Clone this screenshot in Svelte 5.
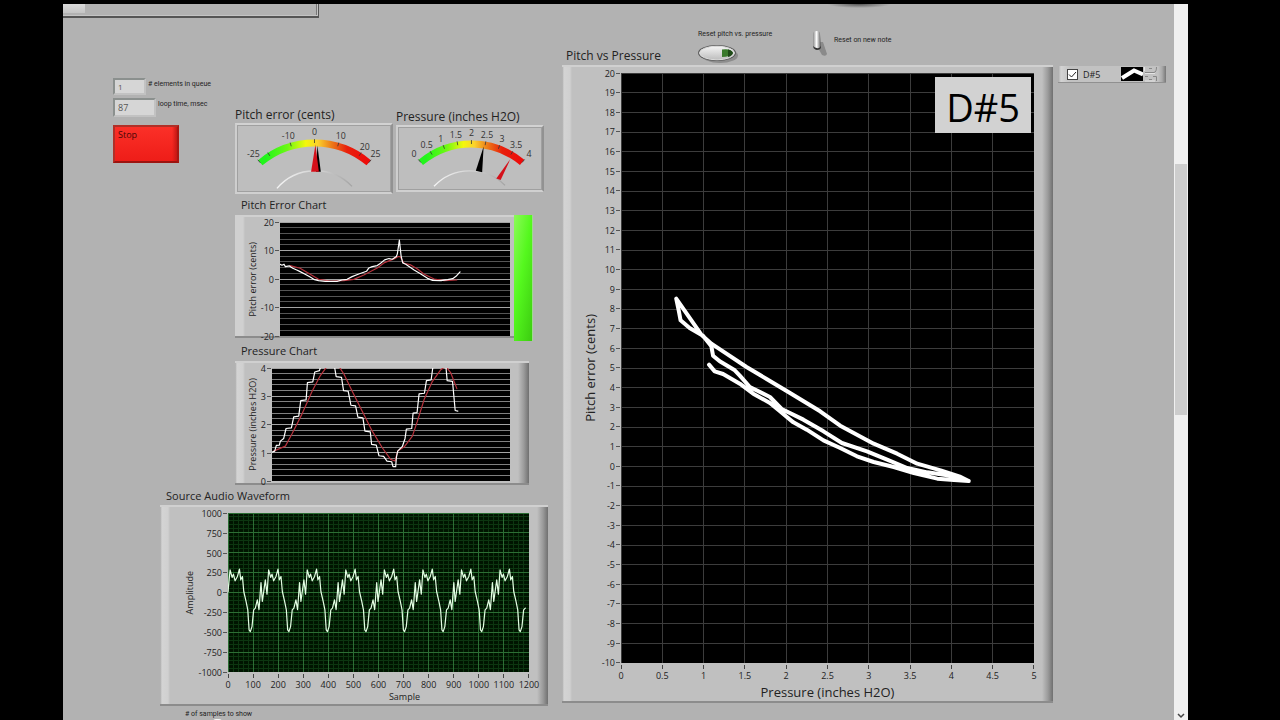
<script>
	let stopped = $state(false);
	let resetOnNote = $state(false);
	let showTrace = $state(true);
	let queue = $state('1');
	let loopTime = $state('87');

	const range = (from, to, step) => {
		const out = [];
		const count = Math.round((to - from) / step);
		for (let i = 0; i <= count; i++) out.push(from + i * step);
		return out;
	};

	// one cycle of the note, measured from its trough
	const cycle = [
		[0, 355], [5, 340], [10, 290], [15, 285], [21, 260], [26, 289], [32, 208], [36, 265],
		[45, 200], [50, 243], [55, 170], [61, 193], [65, 183], [70, 203], [77, 190], [83, 168],
		[87, 200], [92, 190], [96, 235], [103, 265], [108, 290], [112, 350]
	];
	const wave = [[0, 236]];
	for (let n = -1; n < 8; n++) {
		for (const [dx, y] of cycle) {
			const x = 67 + n * 115.7 + dx;
			if (x > 3 && x < 893) wave.push([x, y]);
		}
	}

	const pitchChart = {
		name: 'pitch',
		yLabel: 'Pitch error (cents)',
		yTicks: range(-20, 20, 10).reverse(),
		yMinor: 20,
		yMajor: 4,
		box: '0 0 686 340',
		lines: [
			{
				color: '#b8323c',
				points:
					'30,130 60,138 90,156 115,171 150,176 190,175 220,171 250,158 290,137 310,122 340,110 353,103 358,103 370,123 390,128 410,140 430,156 460,170 490,175 527,173'
			},
			{
				color: '#fff',
				points:
					'0,126 6,129 12,126 16,133 28,131 38,138 50,143 60,148 75,156 90,164 103,172 115,175 135,177 170,177 185,173 200,171 215,163 235,155 258,147 265,137 275,133 290,130 300,123 312,113 325,109 335,111 347,103 350,95 356,54 361,100 366,122 375,126 400,143 420,155 440,168 455,174 480,175 500,172 515,169 525,162 537,149'
			}
		]
	};

	const pressureChart = {
		name: 'pressure',
		yLabel: 'Pressure (inches H2O)',
		yTicks: range(0, 4, 1).reverse(),
		yMinor: 20,
		yMajor: 4,
		box: '0 0 712 340',
		lines: [
			{
				color: '#b8323c',
				points:
					'5,250 40,235 60,198 90,138 120,70 145,22 165,-5 200,-5 215,18 240,70 270,130 300,190 330,240 355,275 368,280 376,250 395,238 420,205 435,160 455,95 480,40 505,5 520,-5 535,15 553,62'
			},
			{
				color: '#fff',
				points:
					'0,253 8,250 13,233 22,232 25,220 35,212 42,182 58,180 65,147 80,145 86,98 102,96 106,44 122,42 128,12 142,8 147,-10 186,-10 192,26 208,28 214,68 228,70 236,112 250,114 257,148 272,150 278,190 294,192 298,230 312,232 320,264 334,266 344,280 358,282 362,297 370,297 372,270 376,250 390,236 398,212 402,184 418,182 422,136 434,134 440,78 456,76 462,38 476,36 482,-8 520,-8 524,38 540,40 548,128 556,130'
			}
		]
	};

	const waveChart = {
		name: 'wave',
		yLabel: 'Amplitude',
		xLabel: 'Sample',
		yTicks: range(-1000, 1000, 250).reverse(),
		xTicks: range(0, 1200, 100),
		yMinor: 40,
		yMajor: 8,
		xMinor: 60,
		xMajor: 12,
		box: '0 0 903 476',
		lines: [{ color: '#e4ffe4', points: wave.map((p) => p.join()).join(' ') }]
	};

	const xyChart = {
		name: 'xy',
		yLabel: 'Pitch error (cents)',
		xLabel: 'Pressure (inches H2O)',
		yTicks: range(-10, 20, 1).reverse(),
		xTicks: range(0, 5, 0.5),
		yMajor: 30,
		xMajor: 10,
		box: '-55 -620 1234 1770',
		lines: [
			{
				color: '#fff',
				width: 4,
				points:
					'208,255 225,275 250,283 300,312 340,342 390,370 420,395 460,428 500,450 550,482 600,505 650,530 700,547 760,562 820,580 890,597 940,601 984,604 960,592 900,572 830,552 770,522 700,492 650,465 600,438 540,395 450,340 380,298 320,262 260,222 215,192 185,165 110,57 118,95 123,122 150,145 190,168 215,200 220,228 240,245 285,272 300,288 330,322 390,352 425,388 490,420 550,455 605,490 680,515 740,540 800,565 860,578 940,590 984,604'
			}
		]
	};

	const pitchGauge = {
		name: 'g-pitch',
		title: 'Pitch error (cents)',
		width: 158,
		height: 69,
		cx: 79.5,
		cy: 107,
		r: 86.5,
		min: -25,
		max: 25,
		ticks: [-25, -20, -10, 0, 10, 20, 25],
		hidden: -20,
		inner: 'M41 67 A52 52 0 0 1 118 65',
		needles: [
			{ color: '#000', points: '82.5,23 81,50 86,50' },
			{ color: '#d4101a', points: '80.5,22 76,50 84,50' }
		]
	};

	const pressureGauge = {
		name: 'g-pressure',
		title: 'Pressure (inches H2O)',
		width: 148,
		height: 65,
		cx: 75.5,
		cy: 100.5,
		r: 81,
		min: 0,
		max: 4,
		ticks: range(0, 4, 0.5),
		inner: 'M37 63 A51 51 0 0 1 110 62',
		needles: [
			{ color: '#000', points: '88,22 80,47 86.5,48.5' },
			{ color: '#d4101a', points: '115.5,35 101,55 105.5,56.5' }
		]
	};

	// point on a gauge's circle; the scale spans 40 degrees either side of the top
	function polar(g, value, r) {
		const t = (value - g.min) / (g.max - g.min);
		const a = ((t * 80 - 40) * Math.PI) / 180;
		return [g.cx + r * Math.sin(a), g.cy - r * Math.cos(a)];
	}
</script>

{#snippet gauge(g)}
	{@const start = polar(g, g.min, g.r)}
	{@const end = polar(g, g.max, g.r)}
	<section class="gauge {g.name}">
		<h2>{g.title}</h2>
		<svg viewBox="0 2 {g.width} {g.height}">
			<defs>
				<linearGradient id={g.name}>
					<stop offset="0.05" stop-color="#22f51c" />
					<stop offset="0.25" stop-color="#6cf814" />
					<stop offset="0.42" stop-color="#f4f80c" />
					<stop offset="0.53" stop-color="#fbd22c" />
					<stop offset="0.66" stop-color="#ec7a18" />
					<stop offset="0.8" stop-color="#e8200c" />
					<stop offset="1" stop-color="#ee0a0a" />
				</linearGradient>
				<linearGradient id="{g.name}-hub">
					<stop offset="0" stop-color="#f4f4f4" />
					<stop offset="0.6" stop-color="#cfcfcf" />
					<stop offset="1" stop-color="#a4a4a4" />
				</linearGradient>
			</defs>
			<path
				d="M{start[0]} {start[1]} A{g.r} {g.r} 0 0 1 {end[0]} {end[1]}"
				fill="none"
				stroke="url(#{g.name})"
				stroke-width="7"
			/>
			{#each g.ticks as tick}
				{@const a = polar(g, tick, g.r + 4)}
				{@const b = polar(g, tick, g.r)}
				<line x1={a[0]} y1={a[1]} x2={b[0]} y2={b[1]} stroke="#333" stroke-width="0.8" />
				{#if tick !== g.hidden}
					{@const p = polar(g, tick, g.r + 11)}
					<text x={p[0]} y={p[1] + 3} text-anchor="middle">{tick}</text>
				{/if}
			{/each}
			<path d={g.inner} fill="none" stroke="url(#{g.name}-hub)" stroke-width="1.4" />
			{#each g.needles as needle}
				<polygon points={needle.points} fill={needle.color} />
			{/each}
		</svg>
	</section>
{/snippet}

{#snippet grid(kind, xCount, yCount)}
	<g class={kind}>
		{#each range(0, yCount, 1) as i}
			<line x1="0" x2="100%" y1="{(i / yCount) * 100}%" y2="{(i / yCount) * 100}%" />
		{/each}
		{#if xCount}
			{#each range(0, xCount, 1) as i}
				<line y1="0" y2="100%" x1="{(i / xCount) * 100}%" x2="{(i / xCount) * 100}%" />
			{/each}
		{/if}
	</g>
{/snippet}

{#snippet chart(c)}
	<div class="frame {c.name}">
		<div class="y-label"><span>{c.yLabel}</span></div>
		<div class="y-ticks">
			{#each c.yTicks as tick}
				<span>{tick}</span>
			{/each}
		</div>
		<div class="plot">
			<svg width="100%" height="100%">
				{#if c.yMinor}
					{@render grid('minor', c.xMinor, c.yMinor)}
				{/if}
				{@render grid('major', c.xMajor, c.yMajor)}
				{#if c.name !== 'xy' || showTrace}
					<svg width="100%" height="100%" viewBox={c.box} preserveAspectRatio="none">
						{#each c.lines as line}
							<polyline points={line.points} stroke={line.color} stroke-width={line.width ?? 1.2} />
						{/each}
					</svg>
				{/if}
			</svg>
			{#if c.name === 'xy'}
				<output class="note">D#5</output>
			{/if}
		</div>
		{#if c.xTicks}
			<div class="x-ticks">
				{#each c.xTicks as tick}
					<span>{tick}</span>
				{/each}
			</div>
			<div class="x-label">{c.xLabel}</div>
		{/if}
	</div>
{/snippet}

<main>
	<div class="panel">
		<div class="left">
			<div class="strip"><i></i></div>
			<div class="instruments">
				<div class="controls">
					<div class="field">
						<input id="queue" class="narrow" bind:value={queue} />
						<label for="queue"># elements in queue</label>
					</div>
					<div class="field tall">
						<input id="loop" bind:value={loopTime} />
						<label for="loop">loop time, msec</label>
					</div>
					<button class="stop" onclick={() => (stopped = !stopped)}>Stop</button>
				</div>
				{@render gauge(pitchGauge)}
				{@render gauge(pressureGauge)}
			</div>

			<section class="strip-chart">
				<h2>Pitch Error Chart</h2>
				<div class="with-bar">
					{@render chart(pitchChart)}
					<div class="level"></div>
				</div>
			</section>
			<section class="strip-chart second">
				<h2>Pressure Chart</h2>
				{@render chart(pressureChart)}
			</section>
			<section class="audio">
				<h2>Source Audio Waveform</h2>
				{@render chart(waveChart)}
			</section>
			<div class="samples"># of samples to show<i></i></div>
		</div>

		<section class="right">
			<div class="head">
				<h2>Pitch vs Pressure</h2>
				<div class="reset">
					<label for="reset">Reset pitch vs. pressure</label>
					<button id="reset" aria-label="Reset pitch vs. pressure">
						<svg width="42" height="20" viewBox="0 0 42 20">
							<defs>
								<linearGradient id="cap" x1="0" x2="0" y1="0" y2="1">
									<stop offset="0" stop-color="#f4f4f4" />
									<stop offset="1" stop-color="#bdbdbd" />
								</linearGradient>
							</defs>
							<ellipse cx="22" cy="11.5" rx="18" ry="7.5" fill="#8c8c8c" />
							<ellipse cx="19" cy="9" rx="19" ry="8" fill="#5c5c5c" />
							<ellipse cx="19" cy="9" rx="17.5" ry="6.8" fill="url(#cap)" stroke="#ddd" />
							<path d="M24 5.5 Q33 4 35 9 Q32 13 24 13 Z" fill="#3a7a2c" />
							<path d="M30 5.5 Q34 6 35 9 Q34 12 30 13 Z" fill="#1f4a18" />
						</svg>
					</button>
				</div>
				<div class="toggle">
					<span class="lever">
						<svg width="18" height="30" viewBox="0 0 18 30">
							<defs>
								<linearGradient id="lever">
									<stop offset="0" stop-color="#8a8a8a" />
									<stop offset="0.45" stop-color="#fff" />
									<stop offset="1" stop-color="#555" />
								</linearGradient>
							</defs>
							<path d="M7 12 L11 12 L15 24 Q14 27 10 25 L6 18 Z" fill="#8a8a8a" />
							<path d="M1 4 Q1 1 5 1 Q8 1 8 4 L9 17 Q9 20 5 20 Q1 20 1 17 Z" fill="url(#lever)" />
							<path d="M1 16 Q2 20 5 20 Q9 20 9 16 Q7 19 5 18 Q3 18 1 16" fill="#333" />
						</svg>
						<input id="on-note" type="checkbox" bind:checked={resetOnNote} />
					</span>
					<label for="on-note">Reset on new note</label>
				</div>
			</div>
			{@render chart(xyChart)}
		</section>

		<aside>
			<div class="legend">
				<label>
					<span class="tick-box">
						<input type="checkbox" bind:checked={showTrace} />
						{#if showTrace}
							<svg viewBox="0 0 11 11"><path d="M2 5.5 L4.5 8 L9 3" /></svg>
						{/if}
					</span>
					D#5
				</label>
				<svg width="22" height="14" viewBox="0 0 22 14">
					<rect width="22" height="14" fill="#000" />
					<path d="M1 11 L13 3.5 L22 7.5" fill="none" stroke="#fff" stroke-width="4" />
				</svg>
				<svg width="16" height="16" viewBox="0 0 16 16" fill="none" stroke="#888">
					<path d="M6 2.5 H9 M2 6.5 H11 Q13.5 6 13.5 1 M2 10.5 H5 M10 10.5 H13.5 V15 M6 13.5 H9" />
					<path d="M2 7.5 H12 M2 15 H12 M1.5 1 V5" stroke="#e4e4e4" />
				</svg>
			</div>
		</aside>

		<div class="scrollbar">
			<div class="thumb"></div>
			<svg width="8" height="6" viewBox="0 0 8 6"><path d="M1 1 L4 4 L7 1" /></svg>
		</div>
	</div>
</main>

<style>
	:global(body) {
		background: #000;
	}
	main {
		box-sizing: border-box;
		min-height: 100vh;
		padding: 4px 92px 0 63px;
		display: flex;
		background: #000;
		color: #222;
		font-family: 'Open Sans', 'Noto Sans', sans-serif;
		font-size: 9px;
	}
	.panel {
		flex: 1;
		display: grid;
		grid-template-columns: 499fr 491fr 121fr 14px;
		background: #b2b2b2;
	}
	h2 {
		margin: 0;
		font-size: 11px;
		font-weight: 400;
		line-height: 18px;
		white-space: nowrap;
	}
	label,
	.samples {
		font-family: Roboto, sans-serif;
		font-size: 7px;
		white-space: nowrap;
	}
	.left,
	.right {
		min-width: 0;
	}
	.strip {
		box-sizing: border-box;
		width: 256px;
		height: 14px;
		border: solid #555;
		border-width: 0 1px 2px 0;
		box-shadow: inset -1px -1px #c4c4c4, inset -2px 0 #777;
	}
	.strip i {
		display: block;
		width: 22px;
		height: 9px;
		background: linear-gradient(#dadada, #c4c4c4);
	}

	.instruments {
		display: flex;
		align-items: flex-start;
		padding: 0 18px 0 50px;
	}
	.controls {
		width: 122px;
		flex: none;
		padding-top: 60px;
	}
	.field {
		display: flex;
		gap: 2px;
		height: 20px;
	}
	.field input {
		box-sizing: border-box;
		width: 43px;
		height: 19px;
		padding: 0 3px;
		border: 2px solid;
		border-color: #8b908e #c2c2c2 #c2c2c2 #8b908e;
		background: #d6d6d6;
		color: #555;
		font: 9px 'Open Sans', sans-serif;
	}
	.field input.narrow {
		width: 33px;
		height: 17px;
		font-size: 8px;
	}
	.field label {
		line-height: 13px;
	}
	.tall {
		height: 27px;
	}
	.stop {
		display: flex;
		width: 66px;
		height: 38px;
		padding: 1px 3px;
		border: 2px solid;
		border-color: #b03028 #a81812 #9c1410 #b03028;
		background: linear-gradient(to right, transparent 92%, #c41814), linear-gradient(#fb3028, #ee1d18);
		color: #4a0606;
		font: 9px 'Open Sans', sans-serif;
	}

	.gauge {
		min-width: 0;
		margin-top: 88px;
	}
	.gauge h2 {
		font-size: 12px;
		line-height: 17px;
	}
	.gauge svg {
		display: block;
		box-sizing: border-box;
		width: 100%;
		border: 2px solid;
		border-color: #d2d2d2 #929292 #d0d0d0 #cecece;
		outline: 1px solid #a0a0a0;
		outline-offset: -3px;
		background: #bebebe;
	}
	.gauge text {
		font-size: 9px;
		fill: #333;
	}
	.g-pitch {
		flex: 158;
	}
	.g-pressure {
		flex: 148;
		margin: 90px 0 0 3px;
	}

	.frame {
		display: grid;
		flex: 1;
		grid-template-rows: 1fr;
		background:
			linear-gradient(to right, #aaa, #d4d4d4 2px, #d0d0d0 8px, transparent 10px),
			linear-gradient(to left, #707070, #9a9a9a 5px, transparent 11px), #c0c0c0;
		border-top: 2px solid #d0d0d0;
		border-bottom: 2px solid #8c8c8c;
	}
	.y-label {
		display: flex;
		align-items: center;
		justify-content: center;
		min-height: 0;
	}
	.y-label span {
		writing-mode: vertical-rl;
		transform: rotate(180deg);
		white-space: nowrap;
	}
	.y-ticks {
		display: flex;
		flex-direction: column;
		justify-content: space-between;
	}
	.y-ticks span {
		display: flex;
		align-items: center;
		justify-content: flex-end;
		gap: 1px;
		height: 0;
	}
	.y-ticks span::after {
		content: '';
		width: 4px;
		height: 1px;
		margin-right: 1px;
		background: #555;
	}
	.x-ticks {
		grid-column: 3;
		display: flex;
		justify-content: space-between;
		height: 16px;
		padding-top: 2px;
	}
	.x-ticks span {
		display: flex;
		flex-direction: column;
		align-items: center;
		width: 0;
		line-height: 13px;
	}
	.x-ticks span::before {
		content: '';
		flex: none;
		width: 1px;
		height: 4px;
		background: #444;
	}
	.x-label {
		grid-column: 3;
		justify-self: center;
	}
	.plot {
		position: relative;
		background: #000;
	}
	.plot svg {
		display: block;
		overflow: hidden;
	}
	.plot > svg {
		position: absolute;
		inset: 0;
	}
	.plot line {
		shape-rendering: crispEdges;
	}
	.plot polyline {
		fill: none;
		stroke-linejoin: round;
		stroke-linecap: round;
		vector-effect: non-scaling-stroke;
	}

	.strip-chart {
		margin: 2px 33px 0 172px;
	}
	.strip-chart h2 {
		padding-left: 6px;
	}
	.with-bar {
		display: flex;
		align-items: flex-start;
		height: 127px;
		margin: 1px -4px 0 0;
	}
	.level {
		width: 19px;
		height: 126px;
		box-sizing: border-box;
		border-right: 1px solid #9edc8c;
		background: linear-gradient(100deg, #8cfa58, #55f81e 45%, #3ccc10);
	}
	.pitch {
		height: 114px;
		padding: 5px 4px 0 9px;
		grid-template-columns: 16px 20px 1fr;
		background: linear-gradient(to right, #d0d0d0 8px, transparent 10px), #c0c0c0;
	}
	.pitch .minor {
		stroke: #555;
	}
	.pressure .minor {
		stroke: #808080;
	}
	.pitch .major,
	.pressure .major {
		stroke: #a4a4a4;
	}
	.second {
		margin-top: 0;
	}
	.pressure {
		height: 113px;
		padding: 5px 19px 2px 9px;
		grid-template-columns: 16px 12px 1fr;
		margin-top: 1px;
	}
	.audio {
		margin: 2px 14px 0 97px;
	}
	.audio h2 {
		padding-left: 6px;
	}
	.wave {
		padding: 6px 19px 0 21px;
		grid-template: 159px 18px 14px / 16px 31px 1fr;
	}
	.wave .plot {
		background: #001400;
	}
	.wave .minor {
		stroke: #0c3610;
	}
	.wave .major {
		stroke: #2c6e34;
	}
	.wave .x-label {
		padding-left: 52px;
	}
	.samples {
		padding: 3px 0 0 122px;
		line-height: 10px;
	}
	.samples i {
		display: block;
		width: 9px;
		height: 3px;
		margin-left: 28px;
		border-radius: 4px 4px 0 0;
		background: #f4f4f4;
	}

	.right {
		display: flex;
		flex-direction: column;
	}
	.head {
		display: flex;
		height: 61px;
		padding-left: 4px;
		background: radial-gradient(ellipse 32px 4px at 297px 0, #555, transparent);
	}
	.head h2 {
		margin-top: 43px;
		width: 132px;
		font-size: 12px;
	}
	.reset {
		display: flex;
		flex-direction: column;
		width: 114px;
		padding-top: 25px;
	}
	.reset label {
		line-height: 11px;
	}
	.reset button {
		align-self: flex-start;
		margin-top: 4px;
		padding: 0;
		border: 0;
		background: none;
	}
	.reset svg {
		display: block;
	}
	.toggle {
		display: flex;
		gap: 4px;
		padding-top: 26px;
	}
	.toggle label {
		line-height: 20px;
	}
	.lever {
		position: relative;
		height: 30px;
	}
	.lever input {
		position: absolute;
		inset: 0;
		width: 18px;
		height: 30px;
		margin: 0;
		opacity: 0;
	}
	.xy {
		flex: none;
		padding: 6px 19px 0 20px;
		grid-template: 590px 20px 18px / 16px 23px 1fr;
		box-sizing: border-box;
	}
	.xy .major {
		stroke: #3c3c3c;
	}
	.xy .x-label,
	.xy .y-label {
		font-size: 13px;
		line-height: 18px;
	}
	.note {
		position: absolute;
		top: 4px;
		right: 3px;
		padding: 4px 11px 0;
		background: #d2d2d2;
		color: #000;
		font-size: 38px;
		line-height: 52px;
	}

	aside {
		padding: 62px 8px 0 5px;
	}
	.legend {
		display: flex;
		align-items: center;
		height: 16px;
		padding-left: 9px;
		background:
			linear-gradient(to left, #777, #aaa 4px, transparent 8px),
			linear-gradient(to right, #aaa, #d4d4d4 3px, #c2c2c2 12px);
		border-bottom: 1px solid #909090;
	}
	.legend label {
		flex: 1;
		display: flex;
		align-items: center;
		gap: 5px;
		font-family: 'Open Sans', sans-serif;
		font-size: 9px;
	}
	.legend > svg:last-child {
		margin-right: 7px;
	}
	.tick-box {
		position: relative;
		width: 11px;
		height: 11px;
	}
	.tick-box input {
		appearance: none;
		box-sizing: border-box;
		display: block;
		width: 11px;
		height: 11px;
		margin: 0;
		border: 1px solid #444;
		background: #fff;
	}
	.tick-box svg {
		position: absolute;
		inset: 0;
		fill: none;
		stroke: #222;
		pointer-events: none;
	}

	.scrollbar {
		display: flex;
		flex-direction: column;
		align-items: center;
		justify-content: space-between;
		padding-bottom: 3px;
		background: #f0f0f0;
	}
	.thumb {
		width: 12px;
		height: 251px;
		margin-top: 160px;
		background: #cdcdcd;
	}
	.scrollbar path {
		fill: none;
		stroke: #444;
		stroke-width: 1.5;
	}
</style>
